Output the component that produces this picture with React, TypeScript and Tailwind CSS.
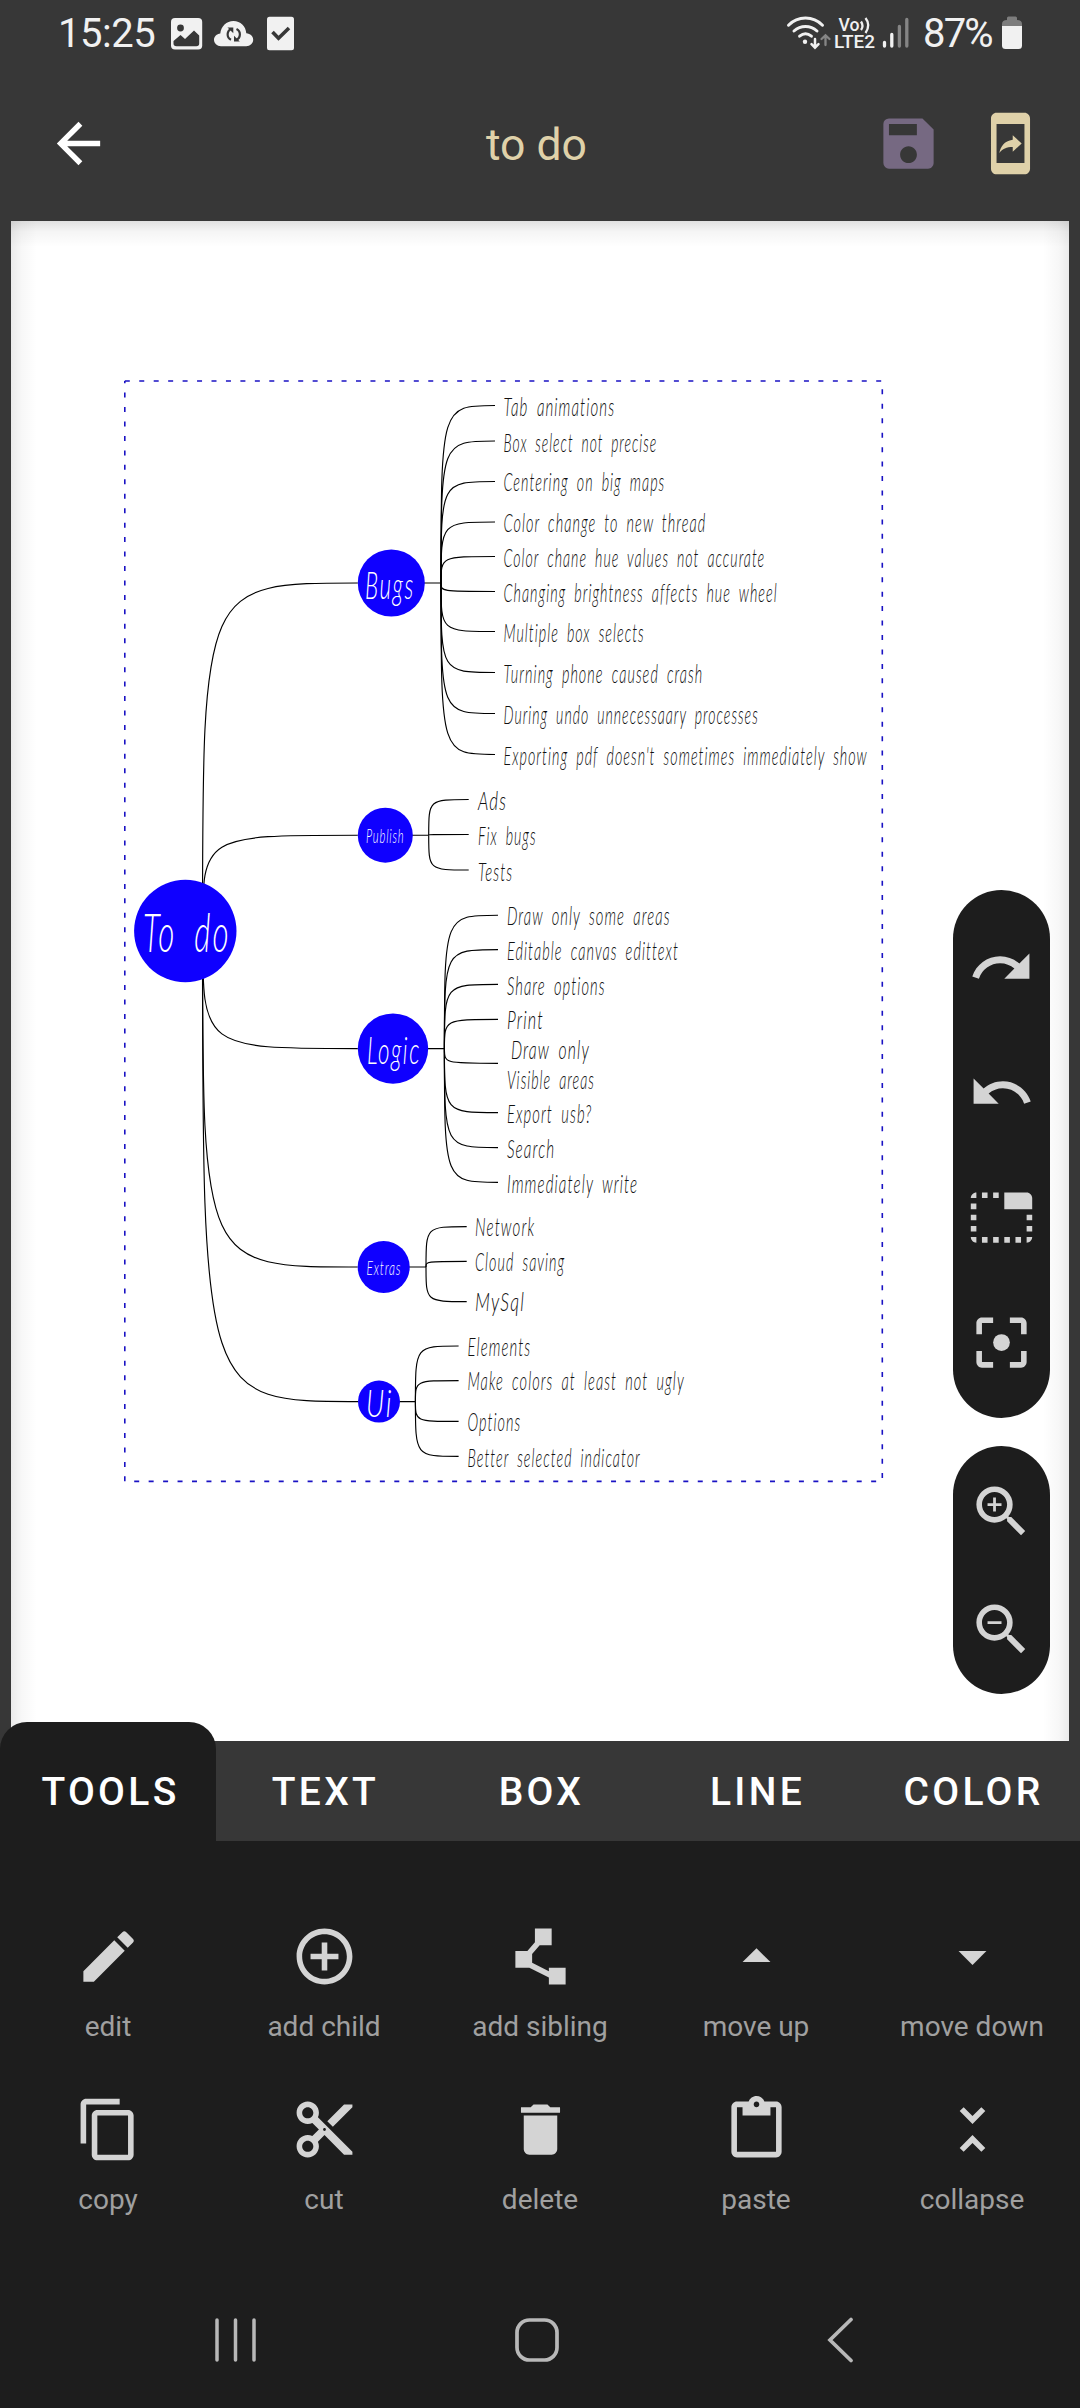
import React from "react";
import {
  MdAddCircleOutline,
  MdArrowBack,
  MdArrowDropDown,
  MdArrowDropUp,
  MdContentCopy,
  MdContentCut,
  MdDelete,
  MdEdit,
  MdMobileScreenShare,
  MdPolyline,
  MdRedo,
  MdSave,
  MdTabUnselected,
  MdUndo,
  MdUnfoldLess,
  MdZoomIn,
  MdZoomOut,
} from "react-icons/md";

type Leaf = { text: string; x?: number; end: number; base: number; line?: number };
type Branch = {
  label: string;
  cx: number;
  cy: number;
  r: number;
  labelX: number;
  labelEnd: number;
  labelBase: number;
  size: number;
  hub: number;
  lineEnd: number;
  textX: number;
  leaves: Leaf[];
};

const branches: Branch[] = [
  {
    label: "Bugs", cx: 391.3, cy: 583, r: 33.5, labelX: 365, labelEnd: 413, labelBase: 598.5, size: 38,
    hub: 441, lineEnd: 495, textX: 503.5,
    leaves: [
      { text: "Tab animations", end: 614, base: 416, line: 405.5 },
      { text: "Box select not precise", end: 656, base: 451.5, line: 441 },
      { text: "Centering on big maps", end: 664, base: 491, line: 481.5 },
      { text: "Color change to new thread", end: 705, base: 532, line: 522 },
      { text: "Color chane hue values not accurate", end: 764, base: 566.5, line: 556.5 },
      { text: "Changing brightness affects hue wheel", end: 776.5, base: 601.5, line: 591.5 },
      { text: "Multiple box selects", end: 643.5, base: 642, line: 631.5 },
      { text: "Turning phone caused crash", end: 702, base: 682.5, line: 672.5 },
      { text: "During undo unnecessaary processes", end: 757.5, base: 723.5, line: 713.5 },
      { text: "Exporting pdf doesn't sometimes immediately show", end: 866.5, base: 764.5, line: 754.5 },
    ],
  },
  {
    label: "Publish", cx: 385.3, cy: 835.2, r: 27.5, labelX: 366, labelEnd: 403.5, labelBase: 843.3, size: 19,
    hub: 428.7, lineEnd: 468.7, textX: 478,
    leaves: [
      { text: "Ads", end: 506, base: 810.3, line: 799.5 },
      { text: "Fix bugs", end: 535.3, base: 844.7, line: 834.5 },
      { text: "Tests", end: 512, base: 880.5, line: 870 },
    ],
  },
  {
    label: "Logic", cx: 393, cy: 1048.6, r: 35.2, labelX: 367, labelEnd: 419, labelBase: 1064.3, size: 38,
    hub: 444.4, lineEnd: 498, textX: 507,
    leaves: [
      { text: "Draw only some areas", end: 669.3, base: 925.3, line: 915.2 },
      { text: "Editable canvas edittext", end: 677.7, base: 959.7, line: 949.6 },
      { text: "Share options", end: 604.3, base: 994.7, line: 984.4 },
      { text: "Print", end: 542.7, base: 1029.3, line: 1019.4 },
      { text: "Draw only", x: 511, end: 588.7, base: 1058.6, line: 1063.4 },
      { text: "Visible areas", x: 507, end: 593.7, base: 1088.6 },
      { text: "Export usb?", end: 591, base: 1123.3, line: 1112.6 },
      { text: "Search", end: 554, base: 1157.6, line: 1147.6 },
      { text: "Immediately write", end: 637, base: 1192.6, line: 1182.4 },
    ],
  },
  {
    label: "Extras", cx: 383.7, cy: 1267, r: 26, labelX: 366.4, labelEnd: 400.4, labelBase: 1275.3, size: 19,
    hub: 426, lineEnd: 466.7, textX: 475,
    leaves: [
      { text: "Network", end: 534, base: 1236.3, line: 1226.6 },
      { text: "Cloud saving", end: 564, base: 1271.3, line: 1261.4 },
      { text: "MySql", end: 524, base: 1311.3, line: 1301.6 },
    ],
  },
  {
    label: "Ui", cx: 379, cy: 1401.6, r: 21, labelX: 366, labelEnd: 391.5, labelBase: 1417.3, size: 38,
    hub: 415.4, lineEnd: 458.6, textX: 467.5,
    leaves: [
      { text: "Elements", end: 530, base: 1356, line: 1346 },
      { text: "Make colors at least not ugly", end: 683.5, base: 1390.3, line: 1380.6 },
      { text: "Options", end: 520, base: 1431.3, line: 1421.4 },
      { text: "Better selected indicator", end: 639.5, base: 1467, line: 1456.4 },
    ],
  },
];

const ROOT = { x: 202.5, y: 931 };

function Label({ text, x, end, base, size, fill }: { text: string; x: number; end: number; base: number; size: number; fill: string }) {
  return (
    <text
      x={x}
      y={base}
      fontSize={size}
      fontStyle="italic"
      fontWeight={300}
      fill={fill}
      letterSpacing={size * 0.07}
      wordSpacing={size * 0.24}
      textLength={end - x + size * 0.05}
      lengthAdjust="spacingAndGlyphs"
      fontFamily="Lato, 'Open Sans', sans-serif"
    >
      {text}
    </text>
  );
}

function MindMap() {
  return (
    <svg className="block h-full w-full" viewBox="11 221 1058 1520" preserveAspectRatio="none">
      <path d="M124.800 381H882.300V1481.400H124.800V381" fill="none" stroke="#1a12c4" strokeWidth="1.600" strokeDasharray="5 9.450" />
      <g fill="none" stroke="#000" strokeWidth="1.150">
        {branches.map((b) => (
          <g key={b.label}>
            <path d={`M${ROOT.x} ${ROOT.y}C${ROOT.x} ${b.cy} ${ROOT.x} ${b.cy} ${b.cx - b.r} ${b.cy}`} />
            <path d={`M${b.cx} ${b.cy}H${b.hub}`} />
            {b.leaves.map((l) =>
              l.line === undefined ? null : (
                <path key={l.text} d={`M${b.hub} ${b.cy}C${b.hub} ${l.line} ${b.hub} ${l.line} ${b.lineEnd} ${l.line}`} />
              ),
            )}
          </g>
        ))}
      </g>
      <circle cx="185.300" cy="931" r="51.200" fill="#0f00ff" />
      <Label text="To do" x={143} end={228} base={951.6} size={54} fill="#fff" />
      {branches.map((b) => (
        <g key={b.label}>
          <circle cx={b.cx} cy={b.cy} r={b.r} fill="#0f00ff" />
          <Label text={b.label} x={b.labelX} end={b.labelEnd} base={b.labelBase} size={b.size} fill="#fff" />
          {b.leaves.map((l) => (
            <Label key={l.text} text={l.text} x={l.x ?? b.textX} end={l.end} base={l.base} size={24.5} fill="#111" />
          ))}
        </g>
      ))}
    </svg>
  );
}

function StatusBar() {
  return (
    <div className="flex h-[66px] shrink-0 items-start justify-between pr-[58px] pl-[58px] text-[#f1f1f1]">
      <div className="flex h-full items-start">
        <span className="w-[113px] pt-[10px] text-[40px] leading-[47px] tracking-[-0.5px]">15:25</span>
        <svg className="mt-[18px] h-[32px] w-[124px]" viewBox="171 18 124 32" overflow="visible">
          <rect x="171" y="18" width="31.200" height="31.500" rx="4" fill="#f1f1f1" />
          <circle cx="180.500" cy="28" r="3.400" fill="#373737" />
          <path d="M173.500 41l7-6 4.500 4 9-8.500 5.200 5V43.500q0 2.800-2.800 2.800H176.500q-3 0-3-2.800z" fill="#373737" />
          <path d="M221 46.200c-4 0-7-2.800-7-6.400s2.800-6 6.300-6.400C221 26.500 226.500 21 233.500 21s12.300 5.200 12.800 12.200c4 .4 6.900 3 6.900 6.600s-3 6.400-7 6.400z" fill="#f1f1f1" />
          <path d="M231.500 28.800a6 6 0 0 0-.5 11M236 40a6 6 0 0 0 .5-11" fill="none" stroke="#373737" strokeWidth="2.200" />
          <path d="M227.500 27.500h5.800v5.800zM239.800 41.500H234v-5.800z" fill="#373737" />
          <rect x="267" y="16.700" width="27" height="33.500" rx="2.500" fill="#f1f1f1" />
          <path d="M272.500 32l6 6.200L289 28" fill="none" stroke="#373737" strokeWidth="3.600" />
        </svg>
      </div>
      <div className="flex h-full items-start">
        <svg className="mt-[14px] h-[40px] w-[124px]" viewBox="787 14 124 40" overflow="visible">
          <g fill="none" stroke="#f1f1f1" strokeLinecap="round" strokeWidth="3">
            <path d="M788.500 25.200c9.500-9.600 24.500-9.600 34 0M794 31c6.700-6 16.300-6 23 0M799.600 36.200c3.700-3 8.100-3 11.800 0" />
            <path d="M815 39v8M811.500 44.200l3.500 3.500 3.500-3.500" strokeWidth="2.500" />
            <path d="M825.500 45v-9M821.500 39l4-3.700 4 3.700" stroke="#858585" strokeWidth="2.300" />
          </g>
          <circle cx="805" cy="41.800" r="2.200" fill="#f1f1f1" />
          <text x="838.500" y="30.500" fontSize="18" fontWeight="500" fill="#f1f1f1" textLength="21" lengthAdjust="spacingAndGlyphs">Vo</text>
          <path d="M861 21.500q3 4.500 0 8.500M865.500 18q5.500 7 0 15" fill="none" stroke="#f1f1f1" strokeWidth="2.300" />
          <text x="834" y="48.300" fontSize="18" fontWeight="500" fill="#f1f1f1" textLength="41" lengthAdjust="spacingAndGlyphs">LTE2</text>
          <g strokeLinecap="round" strokeWidth="3.300">
            <path d="M884.500 42.500v3.600M891.800 34.500v11.600" stroke="#f1f1f1" />
            <path d="M899.400 26.500v19.600M906.800 19.500v26.600" stroke="#858585" />
          </g>
        </svg>
        <span className="ml-[12px] w-[79px] pt-[10px] text-[40px] leading-[47px] tracking-[-1.8px]">87%</span>
        <svg className="mt-[16px] h-[33px] w-[20px]" viewBox="0 0 20 33">
          <path d="M5 4V2q0-1.500 1.500-1.500h7Q15 .5 15 2v2q5 0 5 4v4H0V8q0-4 5-4z" fill="#7d7d7d" />
          <path d="M0 10h20v19.500q0 3.500-3.500 3.500h-13Q0 33 0 29.500z" fill="#f1f1f1" />
        </svg>
      </div>
    </div>
  );
}

function CenterFocus({ className }: { className?: string }) {
  return (
    <svg className={className} viewBox="0 0 24 24" fill="currentColor">
      <path d="M5 15H3v4c0 1.100.900 2 2 2h4v-2H5v-4zM5 5h4V3H5c-1.100 0-2 .900-2 2v4h2V5zm14-2h-4v2h4v4h2V5c0-1.100-.900-2-2-2zm0 16h-4v2h4c1.100 0 2-.900 2-2v-4h-2v4z" />
      <circle cx="12" cy="12" r="3" />
    </svg>
  );
}

function Paste({ className }: { className?: string }) {
  return (
    <svg className={className} viewBox="0 0 24 24" fill="currentColor">
      <path d="M19 2h-4.180C14.400.840 13.300 0 12 0c-1.300 0-2.400.840-2.820 2H5c-1.100 0-2 .900-2 2v16c0 1.100.900 2 2 2h14c1.100 0 2-.900 2-2V4c0-1.100-.900-2-2-2zm-7 0c.550 0 1 .450 1 1s-.450 1-1 1-1-.450-1-1 .450-1 1-1zm7 18H5V4h2v3h10V4h2v16z" />
    </svg>
  );
}

const tabs = ["TOOLS", "TEXT", "BOX", "LINE", "COLOR"];

const tools = [
  { label: "edit", Icon: MdEdit },
  { label: "add child", Icon: MdAddCircleOutline },
  { label: "add sibling", Icon: MdPolyline },
  { label: "move up", Icon: MdArrowDropUp },
  { label: "move down", Icon: MdArrowDropDown },
  { label: "copy", Icon: MdContentCopy },
  { label: "cut", Icon: MdContentCut },
  { label: "delete", Icon: MdDelete },
  { label: "paste", Icon: Paste },
  { label: "collapse", Icon: MdUnfoldLess },
];

export default function App() {
  return (
    <div className="flex h-[2408px] w-[1080px] flex-col overflow-hidden bg-[#373737] font-[Roboto,sans-serif]">
      <StatusBar />

      <header className="grid h-[155px] shrink-0 grid-cols-3 items-start pt-[44px]">
        <div className="pl-[46px]">
          <MdArrowBack className="mt-[1px] size-[65px] text-white" />
        </div>
        <h1 className="pt-[9px] pr-[7px] text-center text-[44.500px] leading-[53px] text-[#dfd1a9]">to do</h1>
        <div className="flex justify-end gap-[35px] pr-[36px]">
          <MdSave className="size-[67px] text-[#766982]" />
          <MdMobileScreenShare className="size-[67px] text-[#dfd1a9]" />
        </div>
      </header>

      <main className="relative mx-[11px] h-[1520px] shrink-0 bg-white">
        <MindMap />
        <div className="absolute inset-x-0 top-0 h-[26px] bg-linear-to-b from-black/12 via-black/4 via-40% to-transparent" />
        <div className="absolute inset-y-0 left-0 w-[26px] bg-linear-to-r from-black/8 via-black/3 via-40% to-transparent" />
        <div className="absolute inset-y-0 right-0 w-[26px] bg-linear-to-l from-black/8 via-black/3 via-40% to-transparent" />
        <div className="absolute top-[669px] right-[19px] flex h-[528px] w-[97px] flex-col items-center gap-[58px] rounded-full bg-[#1d1d1d] pt-[44px] text-[#d4d4d4]">
          <MdRedo className="size-[67px]" />
          <MdUndo className="size-[67px]" />
          <MdTabUnselected className="size-[67px]" />
          <CenterFocus className="size-[67px]" />
        </div>
        <div className="absolute top-[1225px] right-[19px] flex h-[248px] w-[97px] flex-col items-center gap-[51px] rounded-full bg-[#1d1d1d] pt-[32px] text-[#d4d4d4]">
          <MdZoomIn className="size-[67px]" />
          <MdZoomOut className="size-[67px]" />
        </div>
      </main>

      <nav className="relative grid h-[100px] shrink-0 grid-cols-5 text-[39px] font-medium tracking-[3.300px] text-white">
        {tabs.map((tab, i) => (
          <div
            key={tab}
            className={
              i === 0
                ? "-mt-[19px] flex h-[119px] items-center justify-center rounded-t-[27px] bg-[#1d1d1d] pt-[22px] pl-[5px]"
                : "flex h-[100px] items-center justify-center pt-[3px] pl-[3px]"
            }
          >
            {tab}
          </div>
        ))}
      </nav>

      <section className="grid h-[397px] shrink-0 grid-cols-5 content-start gap-y-[73px] bg-[#1d1d1d] pt-[82px]">
        {tools.map(({ label, Icon }) => (
          <div key={label} className="flex h-[100px] flex-col items-center text-[#d4d4d4]">
            <Icon className="size-[67px] shrink-0" />
            <span className="mt-[20px] text-[28px] leading-[33px] whitespace-nowrap text-[#a0a0a0]">{label}</span>
          </div>
        ))}
      </section>

      <footer className="flex grow items-start justify-between bg-[#1d1d1d] pt-[79px] pr-[226px] pl-[214px]">
        <svg className="h-[46px] w-[43px]" viewBox="0 0 43 46" stroke="#b8b8b8" strokeWidth="3.500" strokeLinecap="round">
          <path d="M3 3v40M21.500 3v40M40 3v40" />
        </svg>
        <svg className="mr-[9px] h-[46px] w-[46px]" viewBox="0 0 46 46" fill="none" stroke="#b8b8b8" strokeWidth="3.700">
          <rect x="3" y="3" width="40" height="40" rx="12.500" />
        </svg>
        <svg className="h-[46px] w-[28px]" viewBox="0 0 28 46" fill="none" stroke="#b8b8b8" strokeWidth="3.700" strokeLinecap="round">
          <path d="M25 2.500L4 23l21 20.500" />
        </svg>
      </footer>
    </div>
  );
}
